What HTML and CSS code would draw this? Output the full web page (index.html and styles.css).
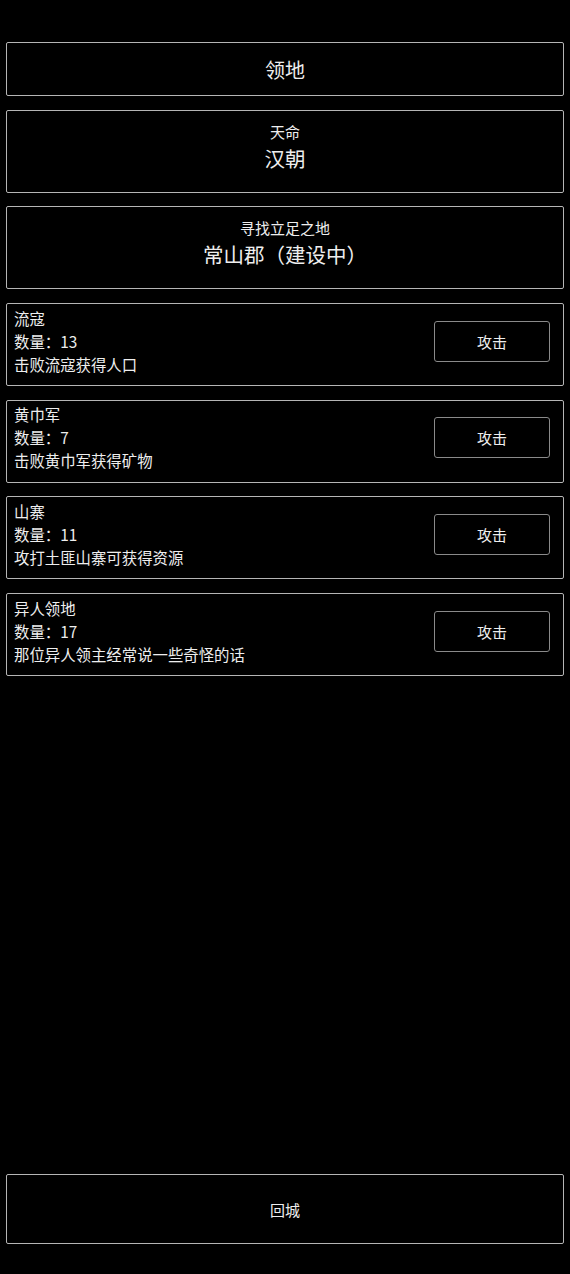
FILE: index.html
```html
<!DOCTYPE html>
<html lang="zh-CN">

<head>
    <meta charset="UTF-8">
    <meta name="viewport" content="width=device-width, initial-scale=1.0">
    <title>领地</title>
    <link rel="stylesheet" href="styles.css">
</head>

<body>
    <div class="page">
        <div class="box title">领地</div>

        <div class="box info">
            <div class="label">天命</div>
            <div class="value">汉朝</div>
        </div>

        <div class="box info">
            <div class="label">寻找立足之地</div>
            <div class="value">常山郡（建设中）</div>
        </div>

        <div class="card">
            <div class="desc">
                <div>流寇</div>
                <div>数量：13</div>
                <div>击败流寇获得人口</div>
            </div>
            <div class="btn">攻击</div>
        </div>

        <div class="card">
            <div class="desc">
                <div>黄巾军</div>
                <div>数量：7</div>
                <div>击败黄巾军获得矿物</div>
            </div>
            <div class="btn">攻击</div>
        </div>

        <div class="card">
            <div class="desc">
                <div>山寨</div>
                <div>数量：11</div>
                <div>攻打土匪山寨可获得资源</div>
            </div>
            <div class="btn">攻击</div>
        </div>

        <div class="card">
            <div class="desc">
                <div>异人领地</div>
                <div>数量：17</div>
                <div>那位异人领主经常说一些奇怪的话</div>
            </div>
            <div class="btn">攻击</div>
        </div>

        <div class="box back">回城</div>
    </div>
</body>

</html>
```

FILE: styles.css
```css
* {
    box-sizing: border-box;
}

body {
    margin: 0;
    background-color: #000000;
    color: #eeeeee;
    font-family: "Noto Sans CJK SC", "Noto Sans", sans-serif;
}

.page {
    display: flex;
    flex-direction: column;
    gap: 13.7px;
    min-height: 100vh;
    padding: 42px 6px 30px;
}

.box {
    border: 1px solid #b5b5b5;
    border-radius: 2px;
    text-align: center;
}

.title {
    height: 54px;
    display: flex;
    align-items: center;
    justify-content: center;
    font-size: 20px;
}

.info {
    height: 83px;
    padding-top: 10px;
}

.label {
    font-size: 15px;
    line-height: 21px;
}

.value {
    font-size: 20.5px;
    line-height: 32px;
}

.card {
    height: 83px;
    display: flex;
    align-items: center;
    justify-content: space-between;
    border: 1px solid #b5b5b5;
    border-radius: 2px;
    padding: 0 13px 0 7px;
    font-size: 15.4px;
    line-height: 23px;
}

.desc {
    margin-bottom: 7px;
}

.btn {
    width: 116px;
    height: 41px;
    margin-bottom: 7px;
    display: flex;
    align-items: center;
    justify-content: center;
    border: 1px solid #8a8a8a;
    border-radius: 3px;
    font-size: 15px;
    cursor: pointer;
}

.back {
    margin-top: auto;
    height: 70px;
    display: flex;
    align-items: center;
    justify-content: center;
    font-size: 15px;
}
```
